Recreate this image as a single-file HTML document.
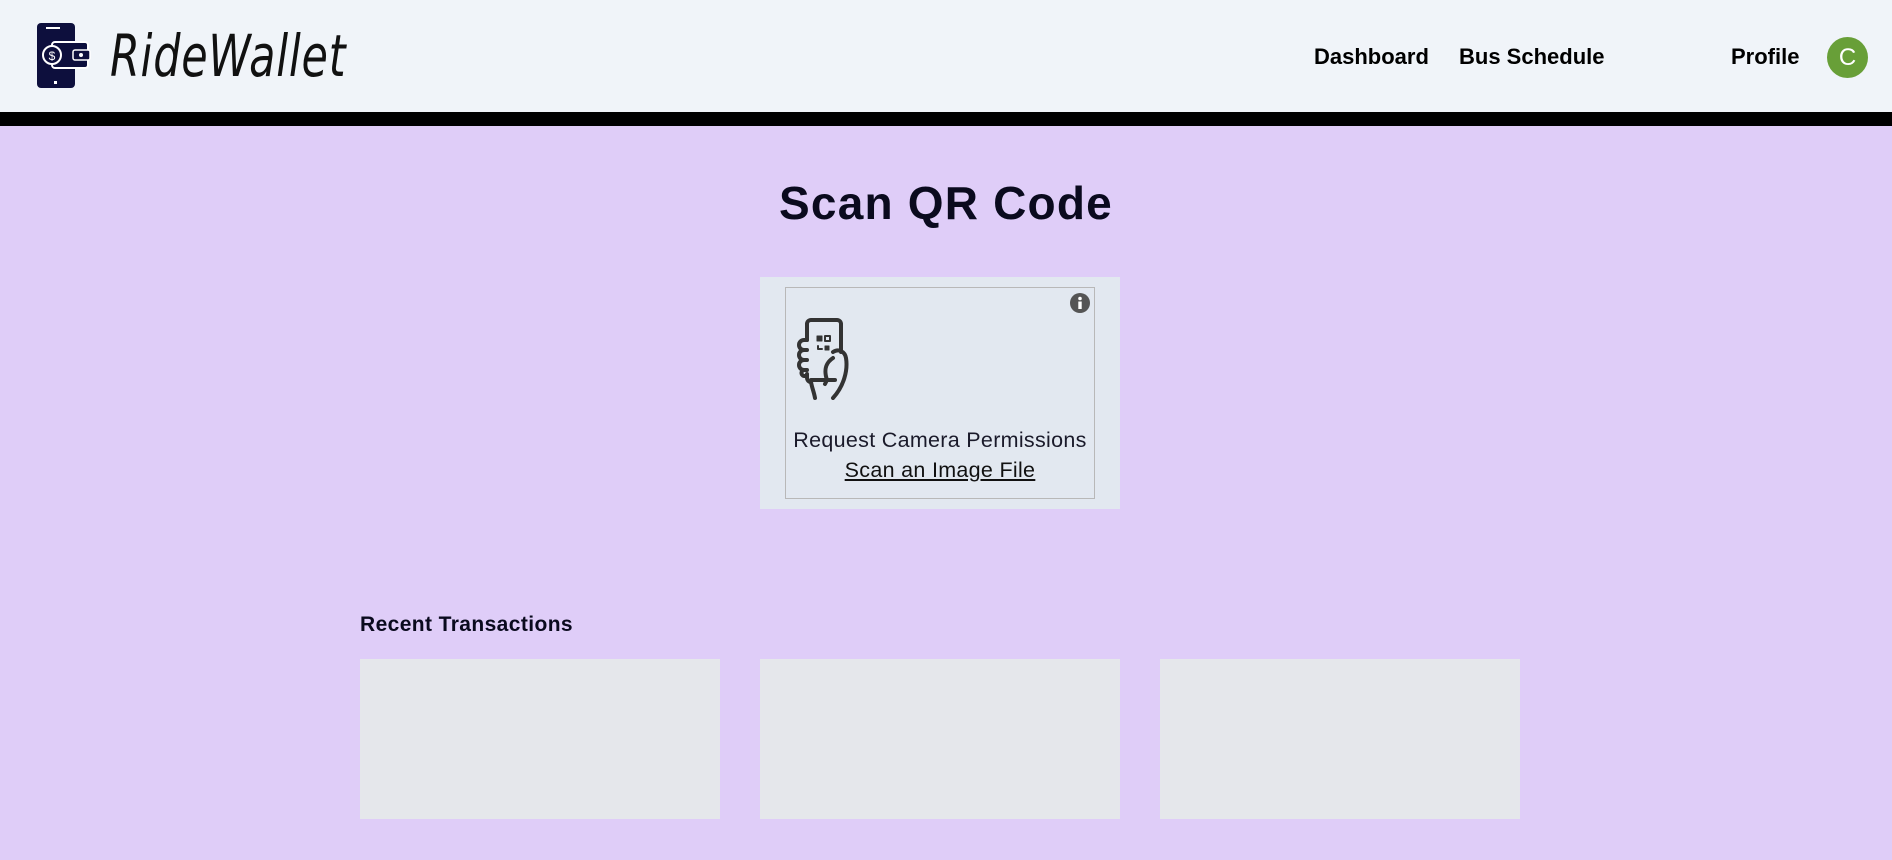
<!DOCTYPE html>
<html><head><meta charset="utf-8"><style>
*{margin:0;padding:0;box-sizing:border-box}
body{width:1892px;height:860px;background:#dfcdf8;font-family:"Liberation Sans",sans-serif;position:relative;overflow:hidden;color:#0a0a1e}
.hdr{position:absolute;left:0;top:0;width:1892px;height:112px;background:#f0f4f9}
.bar{position:absolute;left:0;top:112px;width:1892px;height:14px;background:#000}
.nav{position:absolute;top:44px;font-weight:bold;font-size:22px;color:#000}
.av{position:absolute;left:1827px;top:37px;width:41px;height:41px;border-radius:50%;background:#689f38;color:#fff;font-size:24px;text-align:center;line-height:41px}
.logo{position:absolute;left:110px;top:22px;font-size:58px;font-style:italic;font-family:"DejaVu Sans",sans-serif;font-weight:200;letter-spacing:1px;transform:scaleX(0.74);transform-origin:left;color:#111}
h1{position:absolute;left:0;width:1892px;text-align:center;top:176px;font-size:46px;font-weight:bold;letter-spacing:1.2px}
.outer{position:absolute;left:760px;top:277px;width:360px;height:232px;background:#e2e8f0}
.inner{position:absolute;left:25px;top:10px;width:310px;height:212px;border:1px solid #b8b8b8}
.t1{position:absolute;left:-10px;width:328px;text-align:center;top:140px;font-size:21.5px;color:#1a1a2a;letter-spacing:0.3px}
.t2{position:absolute;left:-10px;width:328px;text-align:center;top:170px;font-size:21.5px;color:#111;text-decoration:underline;letter-spacing:0.3px}
.rt{position:absolute;left:360px;top:613px;font-size:21px;font-weight:bold;letter-spacing:0.4px}
.card{position:absolute;top:659px;width:360px;height:160px;background:#e5e7eb}
</style></head><body>
<div class="hdr"></div><div class="bar"></div>
<svg style="position:absolute;left:37px;top:23px" width="56" height="66" viewBox="0 0 56 66">
<rect x="0" y="0" width="38" height="65" rx="4" fill="#0d0f3d"/>
<rect x="9" y="4" width="14" height="2" fill="#fff"/>
<rect x="17" y="58" width="3" height="3" fill="#fff"/>
<rect x="15" y="19" width="36" height="26" rx="3" fill="#0d0f3d" stroke="#fff" stroke-width="2"/>
<rect x="36" y="27" width="17" height="10" rx="2" fill="#0d0f3d" stroke="#fff" stroke-width="1.5"/>
<circle cx="44" cy="32" r="2" fill="#fff"/>
<circle cx="15" cy="32" r="9" fill="#0d0f3d" stroke="#fff" stroke-width="2"/>
<text x="15" y="37" font-size="12" fill="#fff" text-anchor="middle" font-family="Liberation Sans">$</text>
</svg>
<div class="logo">RideWallet</div>
<div class="nav" style="left:1314px">Dashboard</div>
<div class="nav" style="left:1459px">Bus Schedule</div>
<div class="nav" style="left:1731px">Profile</div>
<div class="av">C</div>
<h1>Scan QR Code</h1>
<div class="outer"><div class="inner">
<svg style="position:absolute;left:9px;top:30px" width="62" height="82" viewBox="0 0 62 82" fill="none" stroke="#333" stroke-width="4" stroke-linecap="round" stroke-linejoin="round">
<path d="M12 22 V6 a4 4 0 0 1 4-4 h26 a4 4 0 0 1 4 4 V34"/>
<path d="M16 62 h24"/>
<path d="M12 56 v4 a4 4 0 0 0 4 4"/>
<path d="M38 34 c6-4 12 0 13 6 c2 12-2 28-13 40"/>
<path d="M38 40 c-6 4-10 10-6 22 l-2 4"/>
<path d="M12 22 h-3 a3 3 0 0 0 0 10 h3 M9 32 a3 3 0 0 0 0 10 h3 M9 42 a3 3 0 0 0 0 10 h3 M9 52 a3 3 0 0 0 1 6"/>
<path d="M16 64 c1 6 3 10 4 16"/>
<rect x="22" y="18" width="5" height="5" fill="#333" stroke-width="1"/>
<rect x="30" y="18" width="5" height="5" stroke-width="2"/>
<path d="M23 28 v3 h4" stroke-width="2"/>
<rect x="30" y="28" width="4" height="4" fill="#333" stroke-width="1"/>
</svg>
<svg style="position:absolute;left:284px;top:5px" width="20" height="20" viewBox="0 0 20 20"><circle cx="10" cy="10" r="10" fill="#555"/><circle cx="10" cy="5.5" r="1.8" fill="#fff"/><rect x="8.3" y="8.5" width="3.4" height="7.5" fill="#fff"/></svg>
<div class="t1">Request Camera Permissions</div>
<div class="t2">Scan an Image File</div>
</div></div>
<div class="rt">Recent Transactions</div>
<div class="card" style="left:360px"></div>
<div class="card" style="left:760px"></div>
<div class="card" style="left:1160px"></div>
</body></html>
